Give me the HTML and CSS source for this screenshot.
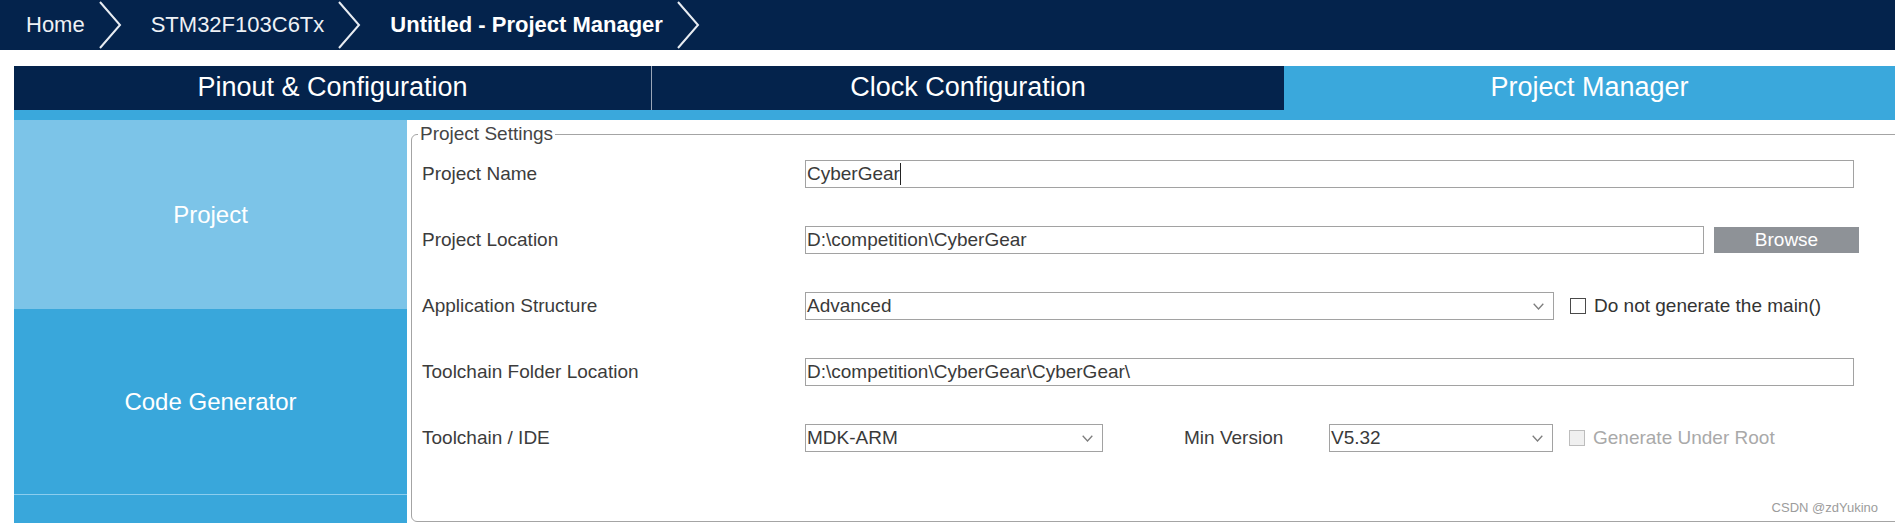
FILE: index.html
```html
<!DOCTYPE html>
<html>
<head>
<meta charset="utf-8">
<link rel="stylesheet" href="styles.css">
</head>
<body>
<div class="topbar">
  <span class="crumb">Home</span>
  <svg class="chev" viewBox="0 0 23 50"><polyline points="1,2 21,25 1,48"/></svg>
  <span class="crumb">STM32F103C6Tx</span>
  <svg class="chev" viewBox="0 0 23 50"><polyline points="1,2 21,25 1,48"/></svg>
  <span class="crumb current">Untitled - Project Manager</span>
  <svg class="chev" viewBox="0 0 23 50"><polyline points="1,2 21,25 1,48"/></svg>
</div>

<div class="tabs">
  <div class="tab tab-pinout">Pinout &amp; Configuration</div>
  <div class="tab tab-clock">Clock Configuration</div>
  <div class="tab tab-active">Project Manager</div>
</div>
<div class="strip"></div>

<div class="main">
  <nav class="side">
    <div class="side-item side-project">Project</div>
    <div class="side-item side-code">Code Generator</div>
    <div class="side-item side-rest"></div>
  </nav>

  <fieldset class="settings">
    <legend>Project Settings</legend>

    <div class="row">
      <span class="label">Project Name</span>
      <div class="field">
        <div class="input w-full"><span class="typed">CyberGear</span></div>
      </div>
    </div>

    <div class="row">
      <span class="label">Project Location</span>
      <div class="field">
        <div class="input w-loc">D:\competition\CyberGear</div>
        <div class="button">Browse</div>
      </div>
    </div>

    <div class="row">
      <span class="label">Application Structure</span>
      <div class="field">
        <div class="input select w-app">Advanced<svg class="drop" viewBox="0 0 11 7"><polyline points="0.7,0.7 5.5,6 10.3,0.7"/></svg></div>
        <span class="check"></span>
        <span class="check-label">Do not generate the main()</span>
      </div>
    </div>

    <div class="row">
      <span class="label">Toolchain Folder Location</span>
      <div class="field">
        <div class="input w-full">D:\competition\CyberGear\CyberGear\</div>
      </div>
    </div>

    <div class="row">
      <span class="label">Toolchain / IDE</span>
      <div class="field">
        <div class="input select w-ide">MDK-ARM<svg class="drop" viewBox="0 0 11 7"><polyline points="0.7,0.7 5.5,6 10.3,0.7"/></svg></div>
        <span class="label min-label">Min Version</span>
        <div class="input select w-ver">V5.32<svg class="drop" viewBox="0 0 11 7"><polyline points="0.7,0.7 5.5,6 10.3,0.7"/></svg></div>
        <span class="check check-disabled"></span>
        <span class="check-label check-label-disabled">Generate Under Root</span>
      </div>
    </div>
  </fieldset>

  <div class="watermark">CSDN @zdYukino</div>
</div>
</body>
</html>
```

FILE: styles.css
```css
html, body {
  margin: 0;
  padding: 0;
  overflow: hidden;
  background: #ffffff;
  font-family: "Liberation Sans", Arial, sans-serif;
}

/* ---------- breadcrumb bar ---------- */
.topbar {
  height: 50px;
  background: #04234c;
  display: flex;
  align-items: center;
  padding-left: 26px;
}
.crumb {
  font-size: 22px;
  color: #eef1f5;
  margin-right: 14px;
  white-space: nowrap;
}
.crumb.current {
  font-weight: bold;
  color: #ffffff;
}
.chev {
  width: 23px;
  height: 50px;
  margin-right: 29px;
  flex: none;
}
.chev polyline {
  fill: none;
  stroke: #e8ecf2;
  stroke-width: 2;
}

/* ---------- main tabs ---------- */
.tabs {
  display: flex;
  margin: 16px 0 0 14px;
  height: 44px;
}
.tab {
  display: flex;
  align-items: center;
  justify-content: center;
  font-size: 27px;
  color: #ffffff;
  background: #04234c;
  padding-bottom: 2px;
  box-sizing: border-box;
}
.tab-pinout {
  width: 638px;
  border-right: 1px solid #9aa6b8;
}
.tab-clock {
  width: 632px;
}
.tab-active {
  flex: 1;
  background: #3aa8dc;
}
.strip {
  height: 10px;
  margin-left: 14px;
  background: #3aa8dc;
}

/* ---------- body ---------- */
.main {
  position: relative;
  display: flex;
  height: 403px;
}
.side {
  width: 393px;
  margin-left: 14px;
  display: flex;
  flex-direction: column;
  flex: none;
}
.side-item {
  display: flex;
  align-items: center;
  justify-content: center;
  font-size: 24px;
  color: #ffffff;
}
.side-project {
  height: 189px;
  background: #7cc4e8;
}
.side-code {
  height: 185px;
  background: #39a7db;
  border-bottom: 1px solid #8ccdee;
}
.side-rest {
  flex: 1;
  background: #39a7db;
}

/* ---------- settings fieldset ---------- */
.settings {
  flex: 1;
  min-width: 0;
  margin: 3px -40px 1px 4px;
  padding: 15px 0 0 10px;
  border: 1px solid #a4a4a4;
  border-radius: 6px;
}
.settings legend {
  margin-left: -4px;
  padding: 0 2px;
  font-size: 19px;
  line-height: 22px;
  color: #454545;
}

.row {
  display: grid;
  grid-template-columns: 383px 1fr;
  align-items: center;
  height: 28px;
  margin-bottom: 38px;
}
.label {
  font-size: 19px;
  color: #3c3c3c;
  white-space: nowrap;
}
.field {
  display: flex;
  align-items: center;
}
.input {
  box-sizing: border-box;
  height: 28px;
  border: 1px solid #a2a2a2;
  display: flex;
  align-items: center;
  padding-left: 1px;
  font-size: 19px;
  color: #3a3a3a;
  white-space: nowrap;
  flex: none;
}
.typed {
  border-right: 1px solid #222;
  line-height: 22px;
}
.select {
  justify-content: space-between;
  padding-right: 9px;
}
.drop {
  width: 11px;
  height: 7px;
}
.drop polyline {
  fill: none;
  stroke: #7e7e7e;
  stroke-width: 1.3;
}
.w-full { width: 1049px; }
.w-loc { width: 899px; }
.w-app { width: 749px; }
.w-ide { width: 298px; }
.w-ver { width: 224px; }

.button {
  margin-left: 10px;
  width: 145px;
  height: 26px;
  background: #8e9297;
  color: #ffffff;
  font-size: 19px;
  display: flex;
  align-items: center;
  justify-content: center;
}

.check {
  width: 16px;
  height: 16px;
  box-sizing: border-box;
  border: 1px solid #4a4a4a;
  margin-left: 16px;
  flex: none;
}
.check-disabled {
  border-color: #bdbdbd;
  background: #f0f0f0;
}
.check-label {
  margin-left: 8px;
  font-size: 19px;
  color: #333333;
  white-space: nowrap;
}
.check-label-disabled {
  color: #a9a9a9;
}
.min-label {
  margin-left: 81px;
  width: 145px;
}

.watermark {
  position: absolute;
  right: 17px;
  bottom: 8px;
  font-size: 13px;
  color: #9c9c9c;
}
```
